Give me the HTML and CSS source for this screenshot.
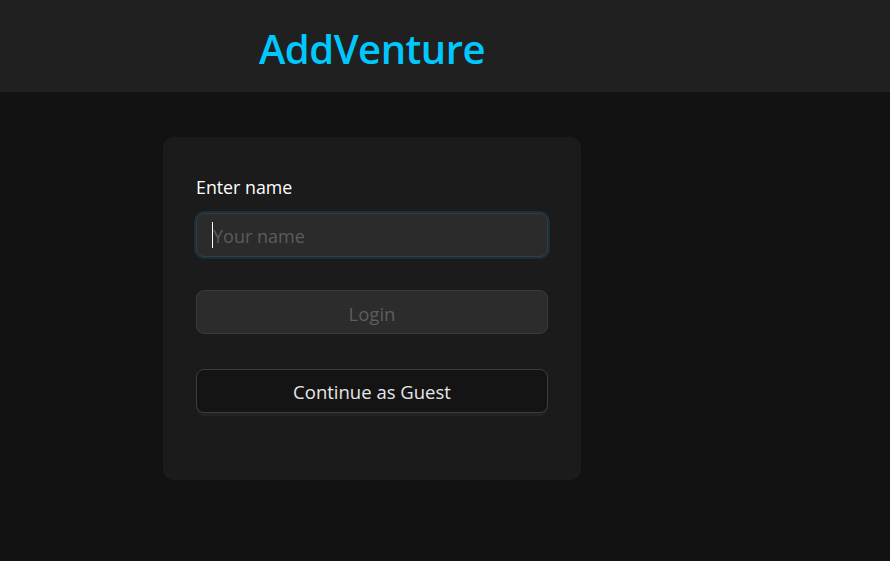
FILE: index.html
```html
<!DOCTYPE html>
<html lang="en">
<head>
<meta charset="utf-8">
<title>AddVenture</title>
<link rel="stylesheet" href="styles.css">
</head>
<body>
<header class="topbar">
  <div class="column">
    <h1 class="brand">AddVenture</h1>
  </div>
</header>
<main class="main">
  <div class="column">
    <form class="card">
      <label class="label" for="name">Enter name</label>
      <div class="field">
        <input id="name" class="input" type="text" placeholder="Your name">
        <span class="caret"></span>
      </div>
      <button type="button" class="btn btn-login" disabled>Login</button>
      <button type="button" class="btn btn-guest">Continue as Guest</button>
    </form>
  </div>
</main>
</body>
</html>
```
FILE: styles.css
```css
* { box-sizing: border-box; }
html, body { margin: 0; padding: 0; }
body {
  background: #121212;
  font-family: "Open Sans", "Noto Sans", sans-serif;
  color: #fff;
  width: 890px;
  height: 561px;
  overflow: hidden;
}
.topbar {
  background: #202020;
  height: 92px;
  display: flex;
  align-items: center;
  padding-left: 163px;
}
.column { width: 418px; }
.brand {
  margin: 0;
  text-align: center;
  color: #00c8ff;
  font-size: 40px;
  font-weight: 600;
  line-height: 1;
  letter-spacing: -0.5px;
  padding-top: 6px;
}
.main {
  padding: 45px 0 0 163px;
}
.card {
  background: #1b1b1b;
  border-radius: 10px;
  padding: 38px 33px 67px;
  display: flex;
  flex-direction: column;
}
.label {
  font-size: 17.8px;
  line-height: 24px;
  color: #fff;
  margin-bottom: 14px;
}
.field {
  position: relative;
  height: 44px;
  margin-bottom: 33px;
}
.input {
  width: 100%;
  height: 44px;
  background: #2b2b2b;
  border: 1px solid #3a3d3d;
  border-radius: 8px;
  box-shadow: 0 0 0 2px #17303a;
  color: #fff;
  font-family: inherit;
  font-size: 18px;
  padding: 2px 16px 0;
  outline: none;
}
.input::placeholder { color: #5c5c5c; }
.caret {
  position: absolute;
  left: 16px;
  top: 9px;
  width: 1px;
  height: 26px;
  background: #fff;
}
.btn {
  height: 44px;
  border-radius: 8px;
  font-family: inherit;
  font-size: 18.5px;
  padding: 3px 0 0;
}
.btn-login {
  background: #2c2c2c;
  border: 1px solid #3b3b3b;
  color: #5e5e5e;
  margin-bottom: 35px;
}
.btn-guest {
  background: #141414;
  border: 1px solid #3d3d3d;
  color: #e6e6e6;
  box-shadow: 0 3px 0 #232323;
  padding-top: 1px;
}
```
